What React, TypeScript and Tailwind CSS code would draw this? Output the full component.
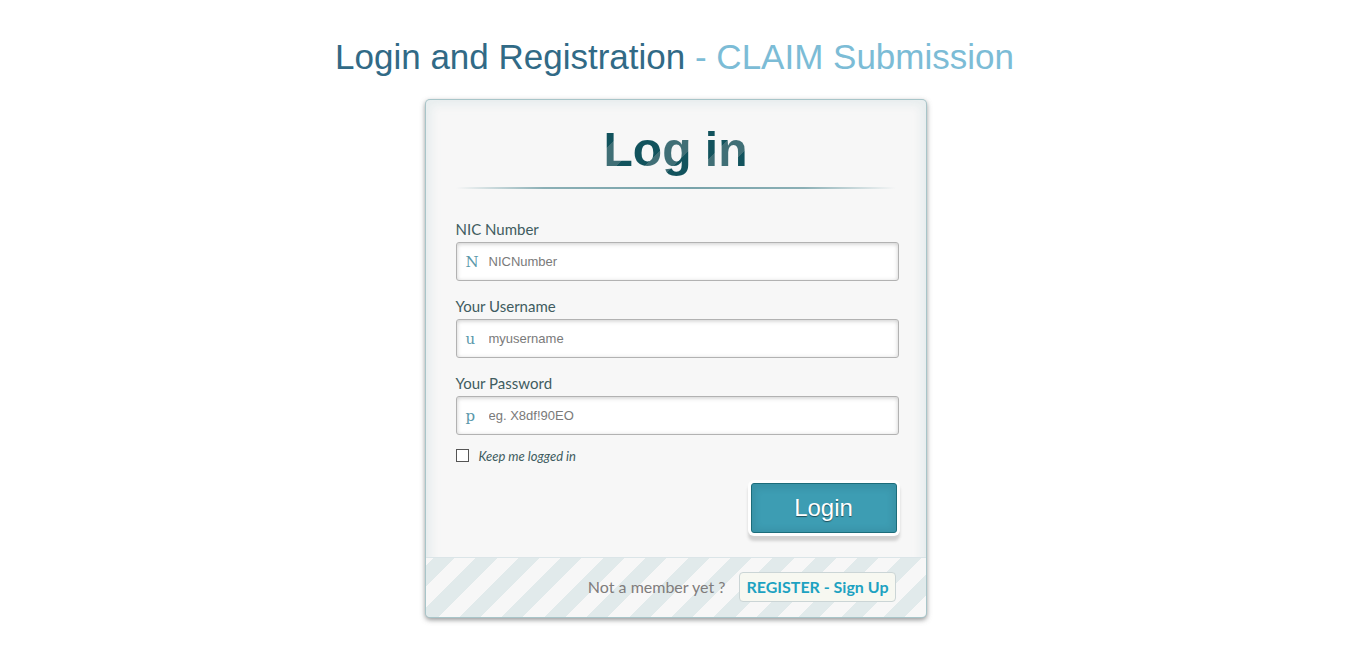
import React from "react";

const body = { fontFamily: "Lato, 'Open Sans', sans-serif" };

function Field({ label, icon, placeholder, type = "text", first = false }: { label: string; icon: string; placeholder: string; type?: string; first?: boolean }) {
  return (
    <div className={first ? "mt-[31px]" : "mt-[16px]"}>
      <div className="text-[15px] leading-[18px] text-[#405c60]" style={body}>{label}</div>
      <div className="relative mt-[4px] h-[39px] w-[443px] rounded-[3px] border border-[#b2b2b2] bg-white shadow-[inset_0_1px_4px_0_rgba(168,168,168,0.6)]">
        <span className="absolute left-[9px] top-[11px] text-[15px] leading-[17px] text-[#5a98aa]" style={{ fontFamily: "'DejaVu Serif', 'Liberation Serif', serif" }}>{icon}</span>
        <input
          type={type}
          placeholder={placeholder}
          className="h-full w-full bg-transparent pl-[32px] pr-[5px] text-[13px] text-[#333] outline-none placeholder:text-[#7a7a7a]"
          style={{ fontFamily: "'Liberation Sans', Arial, sans-serif" }}
        />
      </div>
    </div>
  );
}

export default function App() {
  return (
    <div className="min-h-[659px] w-full bg-white" style={{ fontFamily: "'Liberation Sans', Arial, sans-serif" }}>
      <h1 className="pt-[39px] text-center text-[35px] leading-[35px] font-normal text-[#316a86]">
        Login and Registration <span className="text-[#7cbcd6]">- CLAIM Submission</span>
      </h1>
      <div className="pl-[2px]">
        <div className="mx-auto mt-[25px] w-[502px] rounded-[5px] border border-[rgba(147,184,189,0.8)] bg-[#f7f7f7] shadow-[0_2px_5px_rgba(105,108,109,0.7),inset_0_0_8px_5px_rgba(208,223,226,0.4)]">
          <div className="px-[30px] pt-[22px]">
            <div className="text-center">
              <span className="inline-block bg-[repeating-linear-gradient(-45deg,#12535d_0_20px,#406f76_20px_40px)] bg-clip-text text-[48px] leading-[55px] font-bold text-transparent">
                Log in
              </span>
            </div>
            <div className="mt-[10px] h-[2px] w-[440px] bg-[linear-gradient(to_right,rgba(120,163,170,0)_0%,rgba(120,163,170,0.85)_20%,#78a3aa_53%,rgba(120,163,170,0.85)_79%,rgba(120,163,170,0)_100%)]" />
            <Field first label="NIC Number" icon="N" placeholder="NICNumber" />
            <Field label="Your Username" icon="u" placeholder="myusername" />
            <Field label="Your Password" icon="p" placeholder="eg. X8df!90EO" type="password" />
            <div className="mt-[9px] flex items-center" style={body}>
              <span className="block h-[13px] w-[13px] border border-[#555] bg-white" />
              <span className="ml-[10px] mt-[3px] text-[13px] italic text-[#405c60]">Keep me logged in</span>
            </div>
            <div className="mt-[16px] mr-[-1px] flex justify-end">
              <button className="h-[50px] w-[146px] rounded-[3px] border border-[#1c6c7a] bg-[#3d9db3] text-[24px] text-white [text-shadow:0_1px_1px_rgba(0,0,0,0.5)] shadow-[inset_0_1px_6px_4px_rgba(0,0,0,0.07),0_0_0_3px_#fefefe,0_5px_3px_3px_#d2d2d2]">
                Login
              </button>
            </div>
          </div>
          <div className="mt-[24px] flex h-[60px] items-center justify-end rounded-b-[5px] border-t border-[#dbe5e8] bg-[repeating-linear-gradient(-45deg,#f7f7f7_0_15px,#e1eaeb_15px_30px)] pr-[30px]" style={body}>
            <span className="text-[16px] text-[#7f7c7c]">Not a member yet ?</span>
            <span className="ml-[14px] inline-block rounded-[4px] border border-[#cbd5d6] bg-[#f7f8f1] px-[6px] py-[2px] text-[16px] font-bold text-[#1da2c1]">
              REGISTER - Sign Up
            </span>
          </div>
        </div>
      </div>
    </div>
  );
}
